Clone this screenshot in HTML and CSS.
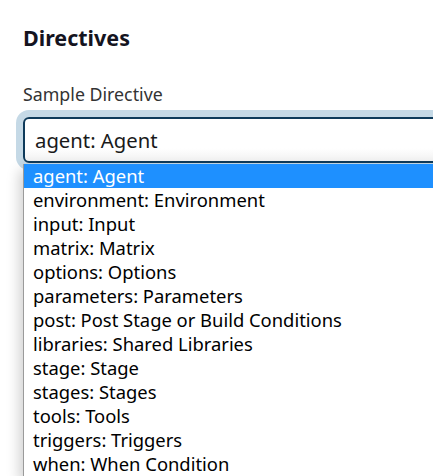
FILE: index.html
```html
<!DOCTYPE html>
<html lang="en">
<head>
<meta charset="utf-8">
<title>Directives</title>
<link rel="stylesheet" href="styles.css">
</head>
<body>
<main class="page">
  <h2 class="title">Directives</h2>
  <label class="field-label">Sample Directive</label>
  <div class="select-wrap">
    <div class="select">agent: Agent</div>
    <ul class="listbox">
      <li class="opt selected">agent: Agent</li>
      <li class="opt">environment: Environment</li>
      <li class="opt">input: Input</li>
      <li class="opt">matrix: Matrix</li>
      <li class="opt">options: Options</li>
      <li class="opt">parameters: Parameters</li>
      <li class="opt">post: Post Stage or Build Conditions</li>
      <li class="opt">libraries: Shared Libraries</li>
      <li class="opt">stage: Stage</li>
      <li class="opt">stages: Stages</li>
      <li class="opt">tools: Tools</li>
      <li class="opt">triggers: Triggers</li>
      <li class="opt">when: When Condition</li>
    </ul>
  </div>
</main>
</body>
</html>
```
FILE: styles.css
```css
html {
  overflow: hidden;
}
html, body {
  margin: 0;
  padding: 0;
  background: #fff;
}
body {
  font-family: "Noto Sans", "Open Sans", sans-serif;
  color: #14141f;
}
.page {
  padding: 24px 0 0 23px;
  width: 460px;
}
.title {
  margin: 0;
  font-size: 21.5px;
  line-height: 28px;
  font-weight: 700;
  color: #14141f;
}
.field-label {
  display: block;
  margin-top: 30px;
  font-size: 17.8px;
  line-height: 24px;
  color: #333;
}
.select-wrap {
  margin-top: 11px;
}
.select {
  height: 42px;
  box-sizing: content-box;
  border: 2px solid #0e3a5a;
  border-radius: 6px;
  box-shadow: 0 0 0 7px #c5d9e6;
  background: linear-gradient(#fff 70%, #f1f1f1);
  padding: 0 10px;
  font-size: 20.3px;
  line-height: 42px;
  color: #1a1a1a;
}
.listbox {
  width: 440px;
  margin: 1px 0 0 0;
  padding: 0;
  list-style: none;
  background: #fff;
  border-left: 1px solid #9a9a9a;
  box-shadow: -4px 6px 12px rgba(0,0,0,0.18);
}
.opt {
  height: 24px;
  line-height: 24px;
  padding-left: 9px;
  font-size: 18.4px;
  color: #000;
  white-space: nowrap;
}
.opt.selected {
  background: #1e90ff;
  color: #fff;
}
```
